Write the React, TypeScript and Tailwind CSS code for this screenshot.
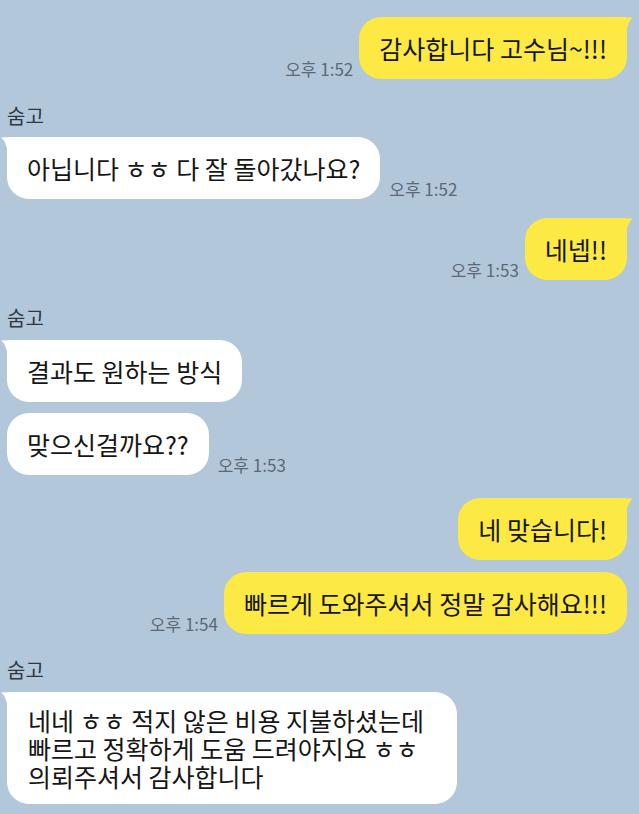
import type { ReactNode } from 'react';

type Side = 'me' | 'other';

const YELLOW = '#fde944';

const Tail = ({ side }: { side: Side }) =>
    side === 'me' ? (
        <svg className="absolute -right-[6px] top-0" width="13" height="16" viewBox="0 0 13 16">
            <path d="M0 0 L13 0.5 Q8 4 6 16 L0 16 Z" fill={YELLOW} />
        </svg>
    ) : (
        <svg className="absolute -left-[6px] top-0 -scale-x-100" width="13" height="16" viewBox="0 0 13 16">
            <path d="M0 0 L13 0.5 Q8 4 6 16 L0 16 Z" fill="#ffffff" />
        </svg>
    );

interface BubbleProps {
    side: Side;
    tail?: boolean;
    time?: string;
    dense?: boolean;
    className?: string;
    children: ReactNode;
}

const Bubble = ({ side, tail, time, dense, className = '', children }: BubbleProps) => {
    const mine = side === 'me';
    return (
        <div className={`flex items-end ${mine ? 'flex-row-reverse gap-[6px] pr-[12px]' : 'gap-[9px] pl-[7px]'} ${className}`}>
            <div
                className={`relative whitespace-nowrap text-[25px] leading-[28px] text-[#161616] ${
                    dense ? 'py-[14px] pl-[21px] pr-[33px]' : 'py-[17px] px-[20px]'
                } ${mine ? 'bg-[#fde944] rounded-[22px]' : 'bg-white rounded-[22px]'} ${
                    tail ? (mine ? 'rounded-tr-[4px]' : 'rounded-tl-[4px]') : ''
                }`}
            >
                {tail && <Tail side={side} />}
                {children}
            </div>
            {time && <span className="text-[17px] leading-[20px] text-[#5c6875] whitespace-nowrap">{time}</span>}
        </div>
    );
};

const Sender = ({ name, className = '' }: { name: string; className?: string }) => (
    <div className={`pl-[7px] text-[20px] leading-[24px] text-[#2e3842] ${className}`}>{name}</div>
);

export default function App() {
    return (
        <div className="min-h-screen w-[639px] bg-[#b2c7da] pt-[17px] font-['Noto_Sans_CJK_KR','Noto_Sans',sans-serif]">
            <Bubble side="me" tail time="오후 1:52">감사합니다 고수님~!!!</Bubble>

            <Sender name="숨고" className="mt-[25px]" />
            <Bubble side="other" tail time="오후 1:52" className="mt-[9px]">
                아닙니다 ㅎㅎ 다 잘 돌아갔나요?
            </Bubble>

            <Bubble side="me" tail time="오후 1:53" className="mt-[19px]">네넵!!</Bubble>

            <Sender name="숨고" className="mt-[26px]" />
            <Bubble side="other" tail className="mt-[10px]">결과도 원하는 방식</Bubble>
            <Bubble side="other" time="오후 1:53" className="mt-[11px]">맞으신걸까요??</Bubble>

            <Bubble side="me" tail className="mt-[23px]">네 맞습니다!</Bubble>
            <Bubble side="me" time="오후 1:54" className="mt-[12px]">빠르게 도와주셔서 정말 감사해요!!!</Bubble>

            <Sender name="숨고" className="mt-[24px]" />
            <Bubble side="other" tail dense className="mt-[10px]">
                네네 ㅎㅎ 적지 않은 비용 지불하셨는데
                <br />
                빠르고 정확하게 도움 드려야지요 ㅎㅎ
                <br />
                의뢰주셔서 감사합니다
            </Bubble>
        </div>
    );
}
